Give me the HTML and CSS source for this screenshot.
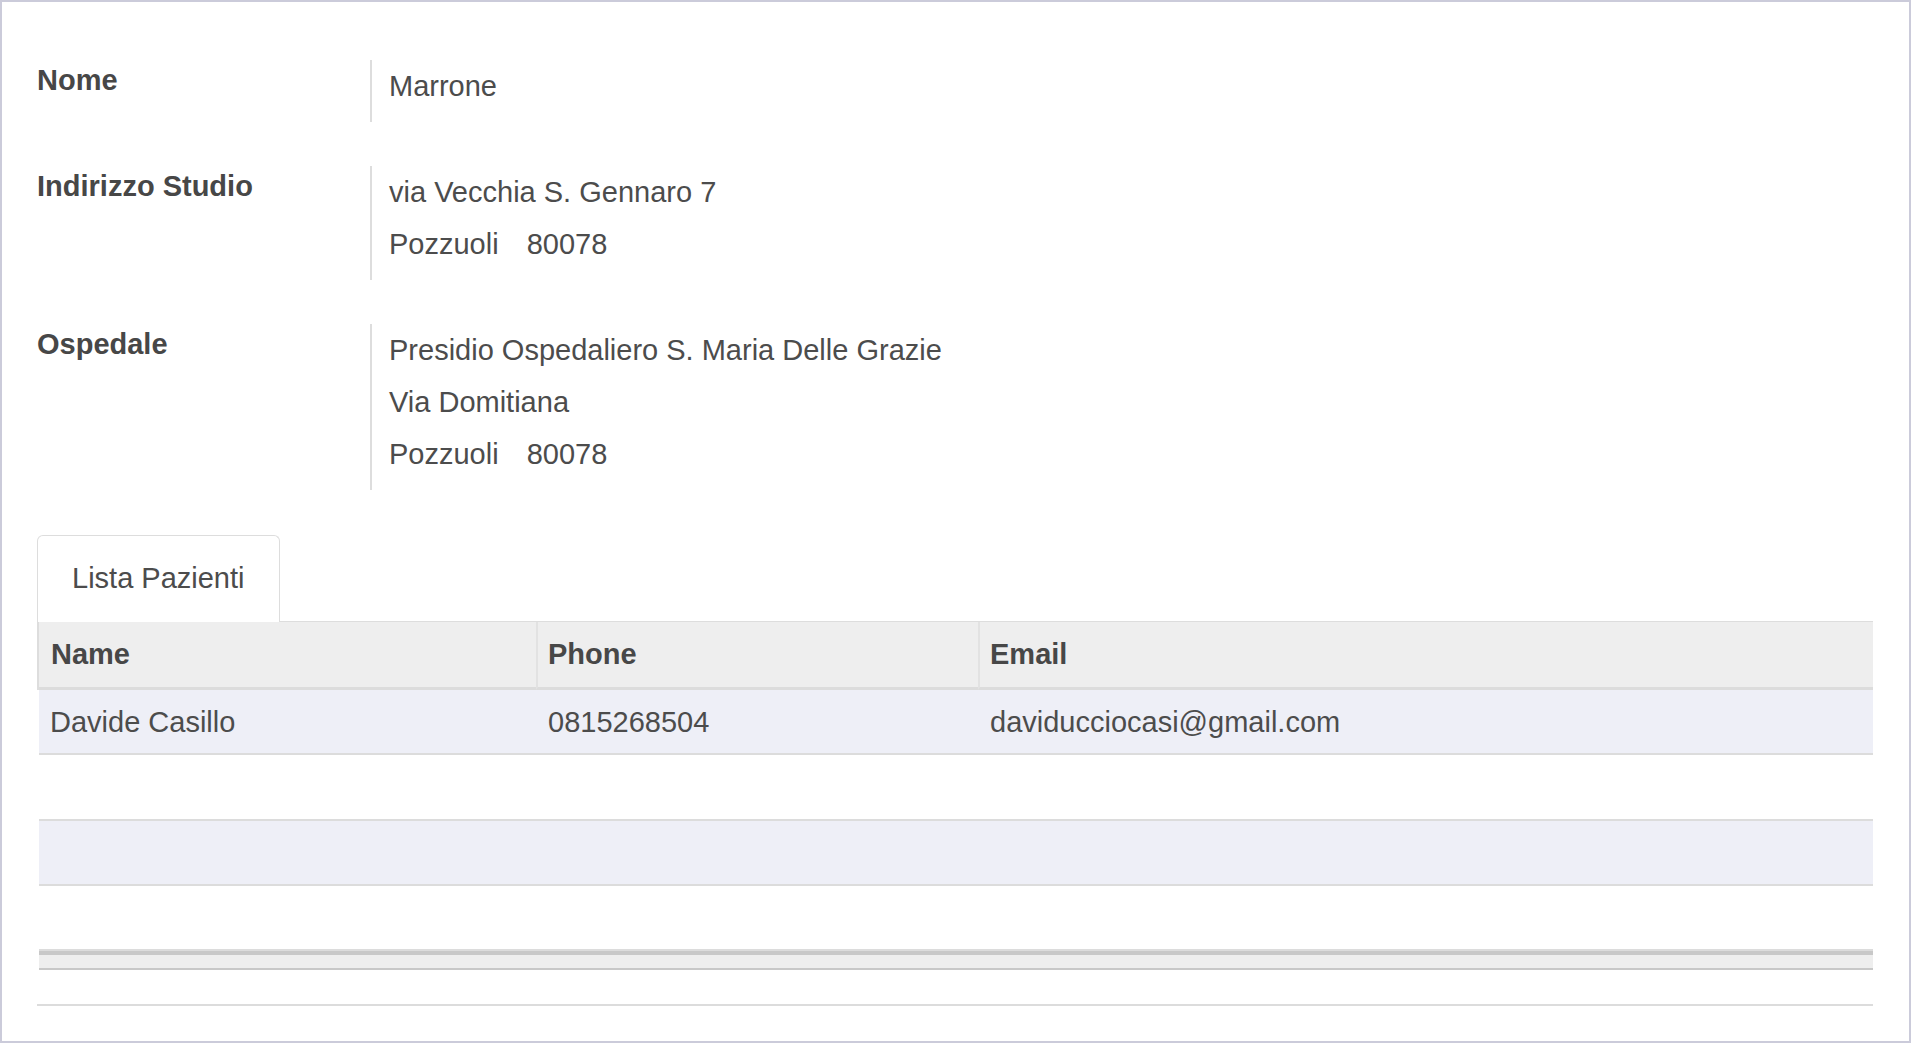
FILE: index.html
```html
<!DOCTYPE html>
<html lang="it">
<head>
<meta charset="utf-8">
<title>Medico</title>
<link rel="stylesheet" href="styles.css">
</head>
<body>
<div class="frame">
  <div class="form">
    <div class="field">
      <div class="label">Nome</div>
      <div class="value">
        <div class="line">Marrone</div>
      </div>
    </div>
    <div class="field">
      <div class="label">Indirizzo Studio</div>
      <div class="value">
        <div class="line">via Vecchia S. Gennaro 7</div>
        <div class="line"><span class="city">Pozzuoli</span><span class="zip">80078</span></div>
      </div>
    </div>
    <div class="field">
      <div class="label">Ospedale</div>
      <div class="value">
        <div class="line">Presidio Ospedaliero S. Maria Delle Grazie</div>
        <div class="line">Via Domitiana</div>
        <div class="line"><span class="city">Pozzuoli</span><span class="zip">80078</span></div>
      </div>
    </div>
  </div>

  <div class="tabs">
    <div class="tab active">Lista Pazienti</div>
  </div>

  <table class="list">
    <colgroup>
      <col class="c-name">
      <col class="c-phone">
      <col class="c-email">
    </colgroup>
    <thead>
      <tr>
        <th class="first">Name</th>
        <th>Phone</th>
        <th>Email</th>
      </tr>
    </thead>
    <tbody>
      <tr class="odd">
        <td>Davide Casillo</td>
        <td>0815268504</td>
        <td>daviducciocasi@gmail.com</td>
      </tr>
      <tr><td>&nbsp;</td><td>&nbsp;</td><td>&nbsp;</td></tr>
      <tr class="odd"><td>&nbsp;</td><td>&nbsp;</td><td>&nbsp;</td></tr>
      <tr><td>&nbsp;</td><td>&nbsp;</td><td>&nbsp;</td></tr>
    </tbody>
    <tfoot>
      <tr><td colspan="3"><div class="foot"></div></td></tr>
    </tfoot>
  </table>

  <div class="bottom-rule"></div>
</div>
</body>
</html>
```

FILE: styles.css
```css
html, body {
  margin: 0;
  padding: 0;
  background: #ffffff;
}

body {
  font-family: "Liberation Sans", Arial, sans-serif;
  font-size: 29px;
  color: #4c4c4c;
}

.frame {
  box-sizing: border-box;
  height: 1043px;
  border: 2px solid #cbcbda;
  padding: 58px 36px 0 35px;
  overflow: hidden;
}

.form {
  display: flex;
  flex-direction: column;
  gap: 44px;
}

.field {
  display: grid;
  grid-template-columns: 333px 1fr;
}

.label {
  font-weight: bold;
  line-height: 41px;
  color: #474747;
}

.value {
  border-left: 2px solid #dddddd;
  padding: 0 0 10px 17px;
}

.line {
  line-height: 52px;
  white-space: nowrap;
}

.zip {
  margin-left: 28px;
}

.tabs {
  margin-top: 45px;
  display: flex;
  border-bottom: 1px solid #dddddd;
}

.tab {
  border: 1px solid #dddddd;
  border-bottom: none;
  border-radius: 6px 6px 0 0;
  background: #ffffff;
  padding: 21px 34px 23px;
  line-height: 42px;
  margin-bottom: -1px;
  white-space: nowrap;
}

.list {
  margin-left: 2px;
  width: 1834px;
  table-layout: fixed;
  border-collapse: separate;
  border-spacing: 0;
  font-size: 29px;
  color: #4c4c4c;
}

.c-name { width: 497px; }
.c-phone { width: 442px; }
.c-email { width: 895px; }

.list th {
  text-align: left;
  font-weight: bold;
  color: #474747;
  background: #eeeeee;
  line-height: 65px;
  padding: 0 10px;
  border-left: 2px solid #e2e2e2;
  border-bottom: 3px solid #dcdcdc;
  white-space: nowrap;
}

.list th.first {
  border-left: none;
  padding-left: 12px;
  box-shadow: -2px 0 0 #dddddd;
}

.list td {
  line-height: 61.25px;
  padding: 2px 11px 0;
  border-bottom: 2px solid #dcdcdc;
  white-space: nowrap;
}

.list tbody td:nth-child(n+2) {
  padding-left: 12px;
}

.list tbody tr.odd td {
  background: #eeeff7;
}

.list tfoot td {
  padding: 0;
  line-height: 0;
  background: #eeeeee;
  border-top: 4px solid #c8c8c8;
  border-bottom: 2px solid #c8c8c8;
}

.foot {
  height: 13px;
}

.bottom-rule {
  margin-top: 34px;
  height: 2px;
  background: #dcdcdc;
}
```
